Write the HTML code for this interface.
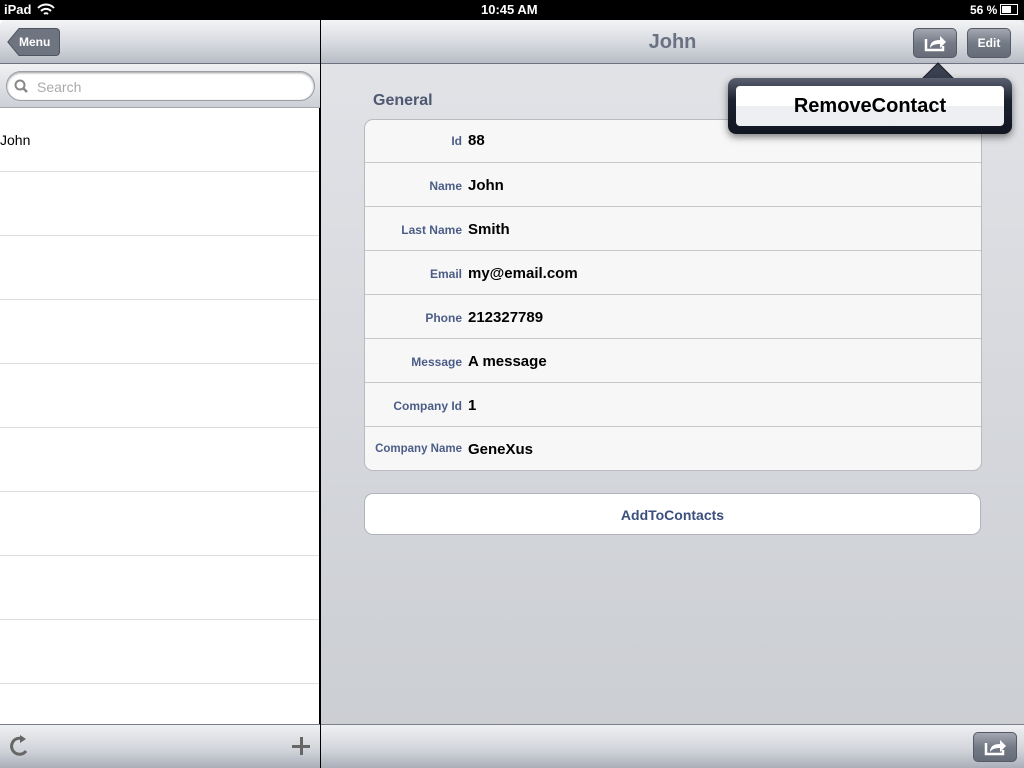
<!DOCTYPE html>
<html><head><meta charset="utf-8"><style>
*{margin:0;padding:0;box-sizing:border-box}
body{width:1024px;height:768px;overflow:hidden;background:#000;font-family:"Liberation Sans",sans-serif;position:relative}
.abs{position:absolute}
.status{top:0;left:0;width:1024px;height:20px;color:#fff;font-size:13px;font-weight:bold}
.nav{background:linear-gradient(#f3f4f6,#d3d6dc 60%,#b8bcc5);border-bottom:1px solid #6d7380}
.tb{background:linear-gradient(#eff0f3,#d0d3d9 60%,#a9aeb9);border-top:1px solid #7a7f8a}
.btn{background:linear-gradient(#a3a7b0,#747a86 50%,#666c78);border:1px solid #555b66;border-radius:5px;color:#fff;font-weight:bold;font-size:12px;text-align:center}
.row{left:0;width:319px;height:64px;border-bottom:1px solid #dedede;background:#fff}
.lbl{position:absolute;right:520px;font-size:12px;font-weight:bold;color:#4b5d87;text-align:right}
.val{position:absolute;left:103px;font-size:15px;font-weight:bold;color:#000}
.tr{position:absolute;left:0;width:617px;height:44px;border-top:1px solid #c8c8cc}
</style></head><body>
<div class="abs status"><span class="abs" style="left:4px;top:2px">iPad</span>
<svg class="abs" style="left:37px;top:3px" width="18" height="14" viewBox="0 0 18 14"><path d="M1 5a11 11 0 0 1 16 0M4 8a7 7 0 0 1 10 0M7 11a3 3 0 0 1 4 0" stroke="#fff" stroke-width="2" fill="none"/></svg>
<span class="abs" style="left:481px;top:2px">10:45 AM</span>
<span class="abs" style="left:970px;top:3px;font-size:12px">56 %</span>
<div class="abs" style="left:1000px;top:4px;width:18px;height:11px;border:1px solid #fff"><div style="width:9px;height:7px;margin:1px;background:#fff"></div></div>
</div>
<!-- left -->
<div class="abs" style="left:0;top:20px;width:320px;height:748px;background:#fff;border-right:1px solid #000">
<div class="abs nav" style="left:0;top:0;width:320px;height:44px;border-radius:5px 0 0 0"></div>
<svg class="abs" style="left:7px;top:8px" width="53" height="28"><path d="M12 .5H49a3.5 3.5 0 0 1 3.5 3.5v20a3.5 3.5 0 0 1-3.5 3.5H12L.8 14Z" fill="#6e7480" stroke="#4f5560"/></svg>
<div class="abs" style="left:19px;top:15px;color:#fff;font-weight:bold;font-size:12px">Menu</div>
<div class="abs" style="left:0;top:44px;width:320px;height:44px;background:linear-gradient(#f0f1f3,#cdd0d6);border-bottom:1px solid #a3a7ae"></div>
<div class="abs" style="left:6px;top:51px;width:309px;height:30px;border-radius:15px;background:#fff;border:1px solid #9a9ea6;box-shadow:inset 0 1px 2px #999"></div>
<svg class="abs" style="left:14px;top:59px" width="16" height="16"><circle cx="6" cy="6" r="4.5" stroke="#888" stroke-width="2" fill="none"/><path d="M9 9l4 4" stroke="#888" stroke-width="2.5"/></svg>
<div class="abs" style="left:37px;top:59px;color:#aaa;font-size:14px">Search</div>
<div class="abs row" style="top:88px"><span class="abs" style="left:0;top:24px;font-size:14px">John</span></div>
<div class="abs row" style="top:152px"></div><div class="abs row" style="top:216px"></div><div class="abs row" style="top:280px"></div><div class="abs row" style="top:344px"></div><div class="abs row" style="top:408px"></div><div class="abs row" style="top:472px"></div><div class="abs row" style="top:536px"></div><div class="abs row" style="top:600px"></div>
<div class="abs tb" style="left:0;top:704px;width:320px;height:44px"></div>
<svg class="abs" style="left:10px;top:715px" width="22" height="22"><path d="M13 4A8 8 0 1 0 16 16" stroke="#666" stroke-width="3" fill="none"/><path d="M10 0l6 4-6 4z" fill="#666"/></svg>
<div class="abs" style="left:292px;width:18px;height:3px;background:#666;top:725px"></div>
<div class="abs" style="left:299.5px;top:717px;width:3px;height:18px;background:#666"></div>
</div>
<!-- right -->
<div class="abs" style="left:321px;top:20px;width:703px;height:748px;background:linear-gradient(#e2e4e8,#d6d8dd 50%,#cacdd2)">
<div class="abs nav" style="left:0;top:0;width:703px;height:44px;border-radius:0 5px 0 0"></div>
<div class="abs" style="left:0;top:11px;width:703px;text-align:center;font-size:20px;font-weight:bold;color:#697182">John</div>
<div class="abs btn" style="left:592px;top:8px;width:44px;height:30px"></div>
<svg class="abs" style="left:603px;top:13px" width="24" height="20"><path d="M2 6v11h17v-4" stroke="#fff" stroke-width="2.5" fill="none"/><path d="M6 15c0-6 4-8 10-8V3l6 6-6 6v-4c-5 0-8 1-10 4z" fill="#fff"/></svg>
<div class="abs btn" style="left:646px;top:8px;width:44px;height:30px;line-height:28px">Edit</div>
<div class="abs" style="left:52px;top:72px;font-size:16px;font-weight:bold;color:#4e5870">General</div>
<div class="abs" style="left:43px;top:99px;width:618px;height:352px;background:#f7f7f7;border:1px solid #b9bbc0;border-radius:9px;overflow:hidden">
<div class="tr" style="top:-1px;border:none"><span class="lbl" style="top:15px">Id</span><span class="val" style="top:13px">88</span></div>
<div class="tr" style="top:42px"><span class="lbl" style="top:16px">Name</span><span class="val" style="top:14px">John</span></div>
<div class="tr" style="top:86px"><span class="lbl" style="top:16px">Last Name</span><span class="val" style="top:14px">Smith</span></div>
<div class="tr" style="top:130px"><span class="lbl" style="top:16px">Email</span><span class="val" style="top:14px">my@email.com</span></div>
<div class="tr" style="top:174px"><span class="lbl" style="top:16px">Phone</span><span class="val" style="top:14px">212327789</span></div>
<div class="tr" style="top:218px"><span class="lbl" style="top:16px">Message</span><span class="val" style="top:14px">A message</span></div>
<div class="tr" style="top:262px"><span class="lbl" style="top:16px">Company Id</span><span class="val" style="top:14px">1</span></div>
<div class="tr" style="top:306px"><span class="lbl" style="top:16px;font-size:11.5px">Company Name</span><span class="val" style="top:14px">GeneXus</span></div>
</div>
<div class="abs" style="left:43px;top:473px;width:617px;height:42px;background:#fff;border:1px solid #b0b3b8;border-radius:9px;text-align:center;line-height:42px;font-size:14px;font-weight:bold;color:#3b4f7d">AddToContacts</div>
<div class="abs tb" style="left:0;top:704px;width:703px;height:44px"></div>
<div class="abs btn" style="left:652px;top:712px;width:44px;height:30px"></div>
<svg class="abs" style="left:663px;top:717px" width="24" height="20"><path d="M2 6v11h17v-4" stroke="#fff" stroke-width="2.5" fill="none"/><path d="M6 15c0-6 4-8 10-8V3l6 6-6 6v-4c-5 0-8 1-10 4z" fill="#fff"/></svg>
</div>
<!-- popover -->
<svg class="abs" style="left:920px;top:62px" width="36" height="20"><path d="M0 19L18 1 36 19Z" fill="#3a4050" stroke="#1b1f2a"/></svg>
<div class="abs" style="left:728px;top:78px;width:284px;height:56px;border-radius:8px;background:linear-gradient(#5a6070,#1d2230 40%,#121622);box-shadow:0 3px 8px rgba(0,0,0,.5)"></div>
<div class="abs" style="left:736px;top:86px;width:268px;height:40px;border-radius:4px;background:linear-gradient(#fff 50%,#eeeff2 50%);text-align:center;line-height:41px;font-size:20px;font-weight:bold;color:#000">RemoveContact</div>
</body></html>
